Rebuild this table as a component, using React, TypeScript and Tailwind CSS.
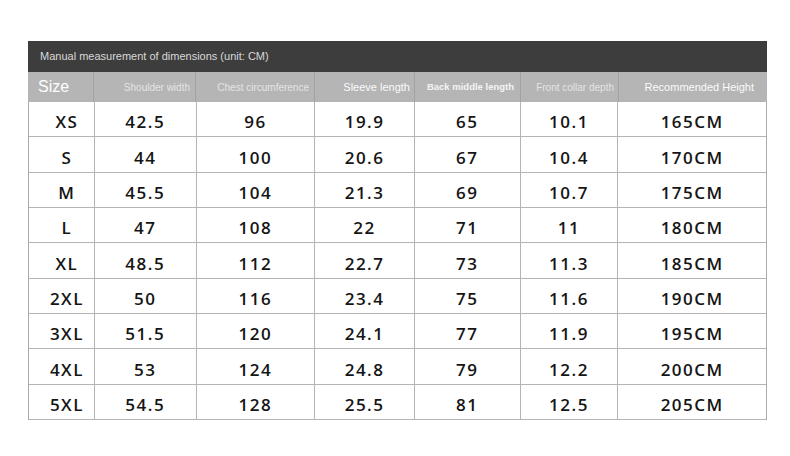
const columns = [
  { w: "w-[66px]", label: "Size" },
  { w: "w-[102px]", label: "Shoulder width" },
  { w: "w-[119px]", label: "Chest circumference" },
  { w: "w-[100px]", label: "Sleeve length" },
  { w: "w-[106px]", label: "Back middle length" },
  { w: "w-[98px]", label: "Front collar depth" },
  { w: "w-[148px]", label: "Recommended Height" },
];

const rows = [
  ["XS", "42.5", "96", "19.9", "65", "10.1", "165CM"],
  ["S", "44", "100", "20.6", "67", "10.4", "170CM"],
  ["M", "45.5", "104", "21.3", "69", "10.7", "175CM"],
  ["L", "47", "108", "22", "71", "11", "180CM"],
  ["XL", "48.5", "112", "22.7", "73", "11.3", "185CM"],
  ["2XL", "50", "116", "23.4", "75", "11.6", "190CM"],
  ["3XL", "51.5", "120", "24.1", "77", "11.9", "195CM"],
  ["4XL", "53", "124", "24.8", "79", "12.2", "200CM"],
  ["5XL", "54.5", "128", "25.5", "81", "12.5", "205CM"],
];

export default function App() {
  return (
    <main className="w-[790px] h-[456px] bg-white pt-[41px] pl-[28px] font-['Liberation_Sans',sans-serif]">
      <div className="w-[739px]">
        <div className="h-[31px] bg-[#3d3d3d] flex items-center pl-[12px] text-[11px] text-[#d9d9d9]">
          Manual measurement of dimensions (unit: CM)
        </div>

        <div className="h-[30px] bg-[#b5b5b5] flex">
          <div className={`${columns[0].w} border-r border-[#a3a3a3] flex items-center pl-[10px] text-[16px] text-white`}>
            Size
          </div>
          <div className={`${columns[1].w} border-r border-[#a3a3a3] flex items-center justify-end pr-[5px] text-[10px] text-[#e4e4e4]`}>
            Shoulder width
          </div>
          <div className={`${columns[2].w} border-r border-[#a3a3a3] flex items-center justify-end pr-[5px] text-[10px] text-[#e4e4e4]`}>
            Chest circumference
          </div>
          <div className={`${columns[3].w} border-r border-[#a3a3a3] flex items-center justify-end pr-[4px] text-[11px] text-[#fafafa]`}>
            Sleeve length
          </div>
          <div className={`${columns[4].w} border-r border-[#a3a3a3] flex items-center justify-end pr-[6px] text-[9.5px] font-bold text-[#f4f4f4]`}>
            Back middle length
          </div>
          <div className={`${columns[5].w} border-r border-[#a3a3a3] flex items-center justify-end pr-[4px] text-[10px] text-[#e4e4e4]`}>
            Front collar depth
          </div>
          <div className={`${columns[6].w} flex items-center justify-end pr-[13px] text-[11px] text-[#fafafa]`}>
            Recommended Height
          </div>
        </div>

        <div className="border-l border-r border-[#ababab] font-['Open_Sans',sans-serif] font-semibold text-[17px] tracking-[1.5px] text-[#151515]">
          {rows.map((row) => (
            <div key={row[0]} className="h-[35.33px] flex border-b border-[#b4b4b4]">
              {row.map((cell, i) => (
                <div
                  key={i}
                  className={`${columns[i].w} ${i === 0 ? "pl-[11px] w-[65px]" : ""} ${
                    i < row.length - 1 ? "border-r border-[#b4b4b4]" : ""
                  } flex items-center justify-center pt-[6px]`}
                >
                  {cell}
                </div>
              ))}
            </div>
          ))}
        </div>
      </div>
    </main>
  );
}
